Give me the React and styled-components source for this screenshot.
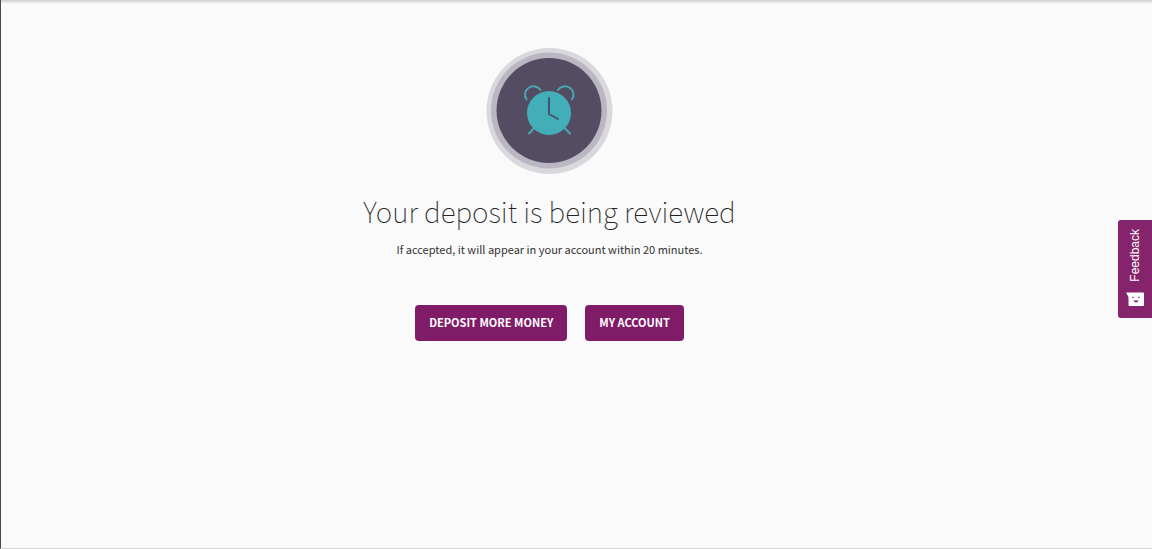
import styled, { createGlobalStyle } from "styled-components";

const GlobalStyle = createGlobalStyle`
  * {
    box-sizing: border-box;
  }

  body {
    margin: 0;
    background-color: #fafafa;
    color: #333;
    font-family: "Noto Sans CJK SC", "Open Sans", sans-serif;
  }
`;

const Page = styled.div`
  display: flex;
  min-height: 100vh;
  border-left: 1px solid #4a4a4a;
  border-bottom: 1px solid #d4d4d4;
  background: linear-gradient(#cecece, #fafafa 4px);
`;

const Content = styled.main`
  flex: 1;
  display: flex;
  flex-direction: column;
  align-items: center;
  padding: 48px 54px 48px 0;
  text-align: center;
`;

const StatusIcon = styled.svg`
  display: block;
  width: 127px;
  height: 127px;
`;

const Title = styled.h1`
  margin: 14px 0 0;
  color: #222;
  font-size: 28px;
  font-weight: 100;
  line-height: 44px;
`;

const Message = styled.p`
  margin: 6px 0 0;
  font-size: 11px;
  font-weight: 400;
  line-height: 20px;
`;

const Actions = styled.div`
  display: flex;
  flex-wrap: wrap;
  justify-content: center;
  gap: 18px;
  margin-top: 46px;
`;

const Button = styled.button`
  height: 36px;
  padding: 0 14px 2px;
  border: 0;
  border-radius: 4px;
  background-color: #7f1b67;
  color: #fff;
  font-family: inherit;
  font-size: 11px;
  font-weight: 700;
  line-height: 20px;
  text-transform: uppercase;
  cursor: pointer;

  &:hover {
    background-color: #6a1556;
  }
`;

const FeedbackTab = styled.button`
  position: fixed;
  top: 220px;
  right: 0;
  display: flex;
  flex-direction: column;
  align-items: center;
  gap: 10px;
  width: 34px;
  height: 98px;
  padding: 9px 0 0;
  border: 0;
  border-radius: 3px 0 0 3px;
  background-color: #85246c;
  color: #fff;
  font-family: "Liberation Sans", Arial, sans-serif;
  font-size: 12px;
  line-height: 16px;
  cursor: pointer;
`;

const FeedbackLabel = styled.span`
  writing-mode: vertical-rl;
  transform: rotate(180deg);
`;

const ClockIcon = () => (
  <StatusIcon viewBox="0 0 127 127" aria-hidden="true">
    <circle cx="63.5" cy="63" r="63" fill="#d9d8dd" />
    <circle cx="63" cy="62.5" r="58" fill="#bab7c3" />
    <circle cx="63" cy="62.5" r="52.5" fill="#544c63" />
    <g fill="none" stroke="#44a9b3" strokeWidth="2" strokeLinecap="round">
      <path d="M40.500 51.500A8.200 8.200 0 1 1 54.500 42" />
      <path d="M72 42A8.200 8.200 0 1 1 86 51.500" />
      <path d="M49 79l-6 6.500M77.500 79l6.500 6.500" />
    </g>
    <circle cx="63" cy="65" r="22" fill="#42afb8" />
    <path
      d="M63 50v16l9 5"
      fill="none"
      stroke="#47536b"
      strokeWidth="2"
      strokeLinecap="round"
      strokeLinejoin="round"
    />
  </StatusIcon>
);

const SmileIcon = () => (
  <svg width="18" height="15" viewBox="0 0 18 15" aria-hidden="true">
    <path
      d="M0 0.500H17Q18 0.500 18 1.500V13Q18 14 17 14H3.500Q2.500 14 2.500 13V5Z"
      fill="#fff"
    />
    <circle cx="7" cy="5.500" r="0.800" fill="#85246c" />
    <circle cx="13" cy="5.500" r="0.800" fill="#85246c" />
    <path d="M7.500 8.500H12.500Q12 10.500 10 10.500T7.500 8.500Z" fill="#85246c" />
  </svg>
);

const App = () => {
  return (
    <>
      <GlobalStyle />
      <Page>
        <Content>
          <ClockIcon />
          <Title>Your deposit is being reviewed</Title>
          <Message>
            If accepted, it will appear in your account within 20 minutes.
          </Message>
          <Actions>
            <Button type="button">Deposit more money</Button>
            <Button type="button">My account</Button>
          </Actions>
        </Content>
      </Page>
      <FeedbackTab type="button">
        <FeedbackLabel>Feedback</FeedbackLabel>
        <SmileIcon />
      </FeedbackTab>
    </>
  );
};

export default App;
